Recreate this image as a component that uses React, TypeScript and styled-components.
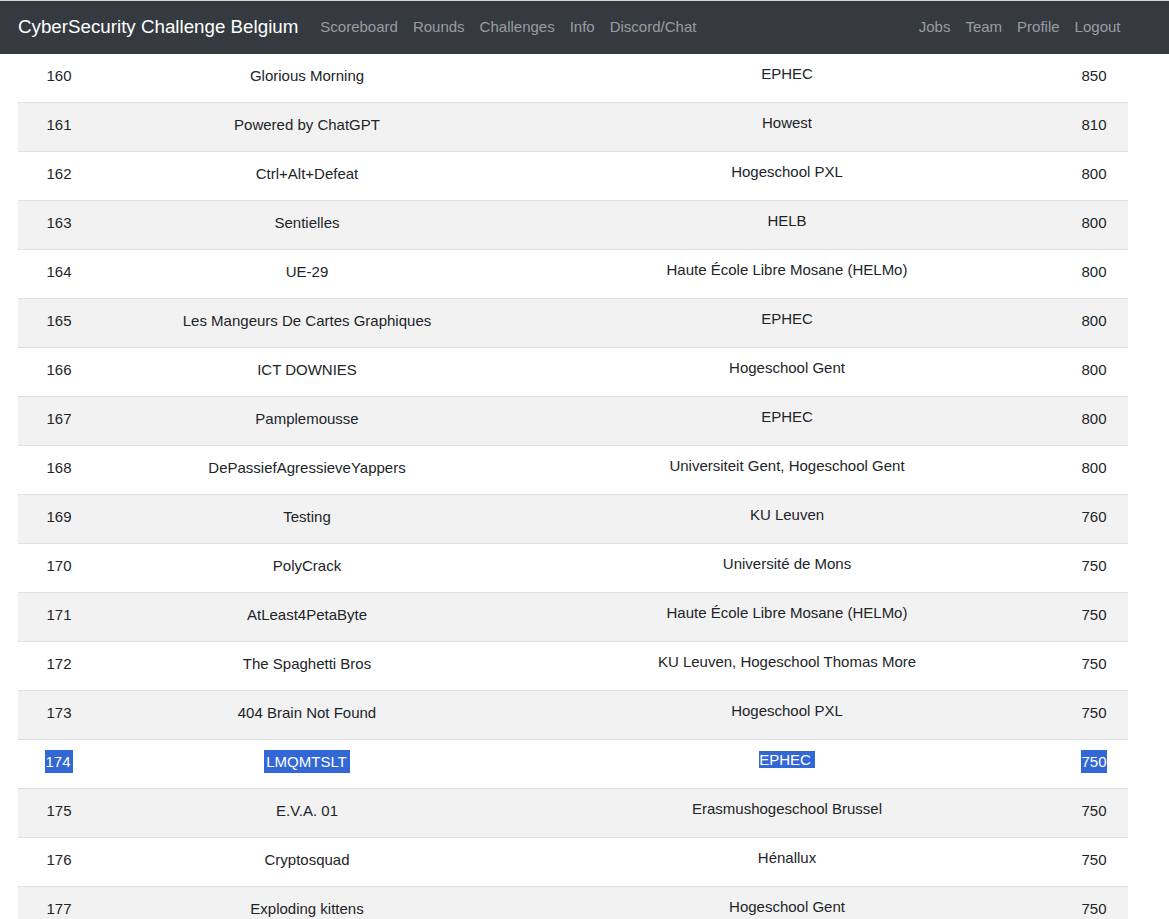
import React from "react";
import styled, { createGlobalStyle } from "styled-components";

const GlobalStyle = createGlobalStyle`
  html, body { margin: 0; padding: 0; background: #fff; }
  body {
    font-family: "Liberation Sans", Arial, sans-serif;
    font-size: 15px;
    line-height: 24px;
    color: #212529;
  }
  * { box-sizing: border-box; }
`;

const Navbar = styled.nav`
  height: 54px;
  background: #343a40;
  border-top: 1px solid #d6d7d8;
  display: flex;
  align-items: center;
  padding: 0 41px 2px 18px;
`;

const Brand = styled.a`
  font-size: 18.75px;
  line-height: 30px;
  color: #fff;
  margin-right: 14.5px;
  white-space: nowrap;
  text-decoration: none;
`;

const NavList = styled.div<{ $right?: boolean }>`
  display: flex;
  margin-left: ${(p) => (p.$right ? "auto" : "0")};
`;

const NavLink = styled.a`
  color: rgba(255, 255, 255, 0.5);
  padding: 8px 7.5px;
  font-size: 15px;
  line-height: 24px;
  text-decoration: none;
  white-space: nowrap;
`;

const Table = styled.div`
  width: 1110px;
  margin-left: 18px;
`;

const Row = styled.div<{ $striped: boolean; $first: boolean }>`
  display: grid;
  grid-template-columns: 82px 414px 546px 68px;
  background: ${(p) => (p.$striped ? "#f2f2f2" : "#fff")};
  border-top: ${(p) => (p.$first ? "none" : "1px solid #dee2e6")};
`;

const Cell = styled.div`
  padding: 10px 12px 14px;
  text-align: center;
  line-height: 24px;
  white-space: nowrap;
`;

const SchoolCell = styled.div`
  padding: 11px 12px 13px;
  text-align: center;
  line-height: normal;
  white-space: nowrap;
`;

const Sel = styled.span<{ $padL?: number; $padR?: number }>`
  display: inline-block;
  background: #3367d6;
  color: #fff;
  height: 23px;
  line-height: 24px;
  padding-left: ${(p) => p.$padL ?? 0}px;
  padding-right: ${(p) => p.$padR ?? 0}px;
`;

const SelSchool = styled.span`
  background: #3367d6;
  color: #fff;
  padding-right: 4px;
`;

const rows: [number, string, string, number][] = [
  [160, "Glorious Morning", "EPHEC", 850],
  [161, "Powered by ChatGPT", "Howest", 810],
  [162, "Ctrl+Alt+Defeat", "Hogeschool PXL", 800],
  [163, "Sentielles", "HELB", 800],
  [164, "UE-29", "Haute École Libre Mosane (HELMo)", 800],
  [165, "Les Mangeurs De Cartes Graphiques", "EPHEC", 800],
  [166, "ICT DOWNIES", "Hogeschool Gent", 800],
  [167, "Pamplemousse", "EPHEC", 800],
  [168, "DePassiefAgressieveYappers", "Universiteit Gent, Hogeschool Gent", 800],
  [169, "Testing", "KU Leuven", 760],
  [170, "PolyCrack", "Université de Mons", 750],
  [171, "AtLeast4PetaByte", "Haute École Libre Mosane (HELMo)", 750],
  [172, "The Spaghetti Bros", "KU Leuven, Hogeschool Thomas More", 750],
  [173, "404 Brain Not Found", "Hogeschool PXL", 750],
  [174, "LMQMTSLT", "EPHEC", 750],
  [175, "E.V.A. 01", "Erasmushogeschool Brussel", 750],
  [176, "Cryptosquad", "Hénallux", 750],
  [177, "Exploding kittens", "Hogeschool Gent", 750],
];

export default function App() {
  return (
    <>
      <GlobalStyle />
      <Navbar>
        <Brand>CyberSecurity Challenge Belgium</Brand>
        <NavList>
          <NavLink>Scoreboard</NavLink>
          <NavLink>Rounds</NavLink>
          <NavLink>Challenges</NavLink>
          <NavLink>Info</NavLink>
          <NavLink>Discord/Chat</NavLink>
        </NavList>
        <NavList $right>
          <NavLink>Jobs</NavLink>
          <NavLink>Team</NavLink>
          <NavLink>Profile</NavLink>
          <NavLink>Logout</NavLink>
        </NavList>
      </Navbar>
      <Table>
        {rows.map(([rank, name, school, score], i) => {
          const selected = rank === 174;
          return (
            <Row key={rank} $striped={i % 2 === 1} $first={i === 0}>
              <Cell>{selected ? <Sel $padR={2}>{rank}</Sel> : rank}</Cell>
              <Cell>{selected ? <Sel $padL={2} $padR={3}>{name}</Sel> : name}</Cell>
              <SchoolCell>{selected ? <SelSchool>{school}</SelSchool> : school}</SchoolCell>
              <Cell>{selected ? <Sel>{score}</Sel> : score}</Cell>
            </Row>
          );
        })}
      </Table>
    </>
  );
}
